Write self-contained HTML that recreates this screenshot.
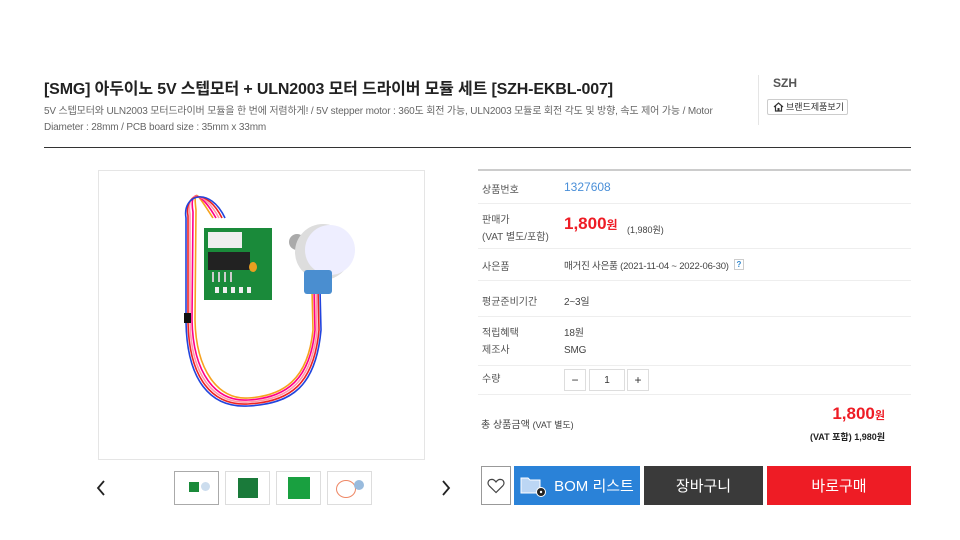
<!DOCTYPE html>
<html><head><meta charset="utf-8"><style>
*{margin:0;padding:0;box-sizing:border-box}
body{width:960px;height:540px;background:#fff;font-family:"Liberation Sans","Noto Sans CJK KR",sans-serif;color:#333;position:relative;overflow:hidden}
.a{position:absolute;white-space:nowrap}
.lbl{font-size:10px;color:#555}
.val{font-size:10px;color:#444;letter-spacing:-0.2px}
.hl{position:absolute;left:478px;width:433px;height:1px;background:#eee}
.th{position:absolute;top:471px;width:45px;height:34px;border:1px solid #ddd;background:#fff}
.btn{position:absolute;top:466px;height:39px;color:#fff;font-size:15px;display:flex;align-items:center;justify-content:center}
.q{position:absolute;top:369px;height:22px;border:1px solid #ddd;font-size:12px;display:flex;align-items:center;justify-content:center;color:#333}
</style></head><body>
<div class="a" style="left:44px;top:75px;font-size:16px;font-weight:bold;color:#222;letter-spacing:-0.15px">[SMG] 아두이노 5V 스텝모터 + ULN2003 모터 드라이버 모듈 세트 [SZH-EKBL-007]</div>
<div class="a" style="left:44px;top:104px;font-size:10px;color:#666;line-height:15.5px;letter-spacing:-0.15px">5V 스텝모터와 ULN2003 모터드라이버 모듈을 한 번에 저렴하게! / 5V stepper motor : 360도 회전 가능, ULN2003 모듈로 회전 각도 및 방향, 속도 제어 가능 / Motor<br>Diameter : 28mm / PCB board size : 35mm x 33mm</div>
<div class="a" style="left:758px;top:75px;width:1px;height:50px;background:#e5e5e5"></div>
<div class="a" style="left:773px;top:76px;font-size:12px;font-weight:bold;color:#555">SZH</div>
<div class="a" style="left:767px;top:99px;width:81px;height:16px;border:1px solid #ccc;border-radius:2px;font-size:9px;color:#333;padding-left:18px;line-height:14px">브랜드제품보기
<svg style="position:absolute;left:5px;top:2px" width="11" height="10" viewBox="0 0 11 10"><path d="M1 5 L5.5 1 L10 5 M2.5 4 V9 H8.5 V4" fill="none" stroke="#333" stroke-width="1.2"/><rect x="4.5" y="6" width="2" height="3" fill="#333"/></svg></div>
<div class="a" style="left:44px;top:147px;width:867px;height:1px;background:#333"></div>

<div class="a" style="left:98px;top:170px;width:327px;height:290px;border:1px solid #e5e5e5"></div>
<svg class="a" style="left:98px;top:170px" width="327" height="290" viewBox="0 0 327 290">
<g fill="none" stroke-width="1.6">
<path d="M115 48 C100 25 95 15 98 40 L97 150 C98 200 120 230 150 228 C185 226 210 210 215 160 L214 120" stroke="#f6a21e"/>
<path d="M118 48 C103 22 91 18 95 42 L94 150 C95 204 118 232 150 230 C188 228 212 210 217 160 L216 120" stroke="#f08"/>
<path d="M121 48 C106 20 88 20 92 44 L92 152 C93 206 116 234 150 232 C190 230 214 212 219 160 L218 120" stroke="#f9a"/>
<path d="M124 48 C109 18 86 22 90 46 L90 152 C91 208 114 236 150 234 C192 232 216 214 221 160 L220 120" stroke="#e22"/>
<path d="M127 48 C112 16 84 24 88 48 L88 152 C89 210 112 238 150 236 C194 234 218 216 223 160 L222 120" stroke="#24d"/>
</g>
<rect x="86" y="143" width="7" height="10" fill="#111"/>
<rect x="106" y="58" width="68" height="72" fill="#1a8a3a"/>
<rect x="110" y="62" width="34" height="16" fill="#eee"/>
<rect x="110" y="82" width="42" height="18" fill="#222"/>
<g fill="#ccc"><rect x="114" y="102" width="2" height="10"/><rect x="120" y="102" width="2" height="10"/><rect x="126" y="102" width="2" height="10"/><rect x="132" y="102" width="2" height="10"/></g>
<g fill="#eee"><rect x="117" y="117" width="4" height="6"/><rect x="125" y="117" width="4" height="6"/><rect x="133" y="117" width="4" height="6"/><rect x="141" y="117" width="4" height="6"/><rect x="149" y="117" width="4" height="6"/></g>
<ellipse cx="155" cy="97" rx="4" ry="5" fill="#e8a020"/>
<circle cx="199" cy="72" r="8" fill="#aaa"/>
<circle cx="225" cy="82" r="28" fill="#ddd"/>
<circle cx="232" cy="80" r="25" fill="#eef"/>
<rect x="206" y="100" width="28" height="24" rx="3" fill="#4a8ed0"/>
</svg>
<svg class="a" style="left:96px;top:480px" width="10" height="16" viewBox="0 0 10 16"><path d="M8 1 L2 8 L8 15" fill="none" stroke="#222" stroke-width="1.8"/></svg>
<svg class="a" style="left:441px;top:480px" width="10" height="16" viewBox="0 0 10 16"><path d="M2 1 L8 8 L2 15" fill="none" stroke="#222" stroke-width="1.8"/></svg>
<div class="th" style="left:174px;border-color:#aaa"><div style="position:absolute;left:14px;top:10px;width:10px;height:10px;background:#1a8a3a"></div><div style="position:absolute;left:26px;top:10px;width:9px;height:9px;border-radius:50%;background:#cde"></div></div>
<div class="th" style="left:225px"><div style="position:absolute;left:12px;top:6px;width:20px;height:20px;background:#1a7a3a"></div></div>
<div class="th" style="left:276px"><div style="position:absolute;left:11px;top:5px;width:22px;height:22px;background:#19a040"></div></div>
<div class="th" style="left:327px"><div style="position:absolute;left:8px;top:8px;width:20px;height:18px;border:1.5px solid #e86;border-radius:50%"></div><div style="position:absolute;left:26px;top:8px;width:10px;height:10px;border-radius:50%;background:#9bd"></div></div>

<div class="a" style="left:478px;top:169px;width:433px;height:2px;background:#ccc"></div>
<div class="a lbl" style="left:482px;top:181px">상품번호</div>
<div class="a" style="left:564px;top:180px;font-size:12px;color:#4a8fd8">1327608</div>
<div class="hl" style="top:203px"></div>
<div class="a lbl" style="left:482px;top:212px;line-height:17px">판매가<br>(VAT 별도/포함)</div>
<div class="a" style="left:564px;top:214px;font-size:17px;font-weight:bold;color:#ee1c25">1,800<span style="font-size:12px">원</span></div>
<div class="a" style="left:627px;top:223px;font-size:9px;color:#444">(1,980원)</div>
<div class="hl" style="top:248px"></div>
<div class="a lbl" style="left:482px;top:258px">사은품</div>
<div class="a val" style="left:564px;top:258px;font-size:9.5px">매거진 사은품 (2021-11-04 ~ 2022-06-30)</div>
<div class="a" style="left:734px;top:259px;width:10px;height:11px;border:1px solid #ccc;font-size:8px;color:#38c;text-align:center;line-height:9px;font-weight:bold;background:#fff">?</div>
<div class="hl" style="top:280px"></div>
<div class="a lbl" style="left:482px;top:293px">평균준비기간</div>
<div class="a val" style="left:564px;top:293px">2~3일</div>
<div class="hl" style="top:316px"></div>
<div class="a lbl" style="left:482px;top:325px;line-height:17px">적립혜택<br>제조사</div>
<div class="a val" style="left:564px;top:325px;line-height:17px">18원<br>SMG</div>
<div class="hl" style="top:365px"></div>
<div class="a lbl" style="left:482px;top:370px">수량</div>
<div class="q" style="left:564px;width:22px">−</div>
<div class="q" style="left:589px;width:36px;font-size:10px">1</div>
<div class="q" style="left:627px;width:22px">+</div>
<div class="hl" style="top:394px"></div>
<div class="a" style="left:481px;top:416px;font-size:10px;color:#444">총 상품금액 <span style="font-size:9px">(VAT 별도)</span></div>
<div class="a" style="right:75px;top:404px;font-size:17px;font-weight:bold;color:#ee1c25">1,800<span style="font-size:11px">원</span></div>
<div class="a" style="right:75px;top:430px;font-size:9px;font-weight:bold;color:#222">(VAT 포함) 1,980원</div>

<div class="btn" style="left:481px;width:30px;border:1px solid #999;background:#fff"><svg width="18" height="16" viewBox="0 0 18 16"><path d="M9 14.5 L2.2 7.8 C0 5.5 1 1.5 4.8 1.4 C6.8 1.4 8 2.6 9 4 C10 2.6 11.2 1.4 13.2 1.4 C17 1.5 18 5.5 15.8 7.8 Z" fill="none" stroke="#444" stroke-width="1.2"/></svg></div>
<div class="btn" style="left:514px;width:126px;background:#2a82d8"><svg width="26" height="22" viewBox="0 0 26 22" style="margin-right:8px"><path d="M1 3 H8 L10 5 H20 V18 H1 Z" fill="#bcd6f4" stroke="#fff" stroke-width="1"/><circle cx="21" cy="17" r="4.5" fill="#222" stroke="#fff"/><circle cx="21" cy="17" r="1.2" fill="#fff"/></svg>BOM 리스트</div>
<div class="btn" style="left:644px;width:119px;background:#3a3a3a">장바구니</div>
<div class="btn" style="left:767px;width:144px;background:#ee1c25">바로구매</div>
</body></html>
